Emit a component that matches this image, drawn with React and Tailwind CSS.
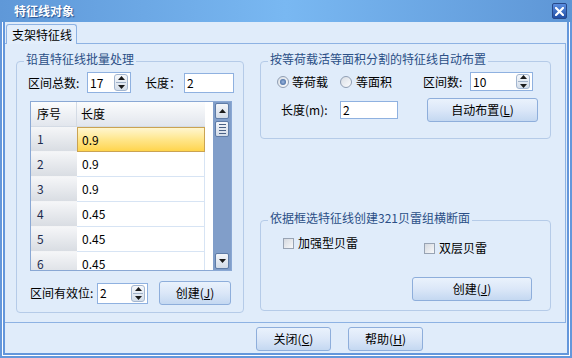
import React from 'react';

const rows = [
  ['1', '0.9'],
  ['2', '0.9'],
  ['3', '0.9'],
  ['4', '0.45'],
  ['5', '0.45'],
  ['6', '0.45'],
];

function Arrow({ up, color = '#1b1b1b' }) {
  return (
    <svg width="7" height="4" viewBox="0 0 7 4" className="block">
      <path d={up ? 'M0 4 L3.5 0 L7 4 Z' : 'M0 0 L3.5 4 L7 0 Z'} fill={color} />
    </svg>
  );
}

function SpinBox({ value, className = '', tall = true }) {
  return (
    <div className={`flex items-center bg-white border border-[#8fb1e0] ${tall ? 'h-[21px]' : 'h-[19px]'} ${className}`}>
      <span className="flex-1 pl-[2px] leading-[14px]">{value}</span>
      <div className={`mr-[2px] flex w-[14px] flex-col items-center justify-center gap-[2px] rounded-[3px] border border-[#a3b6d0] bg-linear-to-b from-[#f6f8fb] to-[#d4deea] ${tall ? 'h-[17px]' : 'h-[15px]'}`}>
        <Arrow up />
        <div className="h-px w-[10px] bg-[#9fb0c6]" />
        <Arrow />
      </div>
    </div>
  );
}

function Input({ value, className = '' }) {
  return (
    <div className={`flex items-center bg-white border border-[#8fb1e0] pl-[2px] leading-[14px] ${className}`}>
      {value}
    </div>
  );
}

function Btn({ children, className = '' }) {
  return (
    <div className={`flex items-center justify-center rounded-[3px] border border-[#8eaedb] bg-linear-to-b from-[#eaf2fc] via-[#dbe7f8] to-[#c4d8f1] text-black ${className}`}>
      {children}
    </div>
  );
}

function Group({ title, className = '', children }) {
  return (
    <fieldset className={`rounded-[4px] border border-[#b5cbe8] ${className}`}>
      <legend className="ml-[7px] px-[2px] pb-[4px] leading-[14px] text-[#2b4f86]">{title}</legend>
      {children}
    </fieldset>
  );
}

function Radio({ checked, className = '' }) {
  return (
    <span className={`flex h-[12px] w-[12px] shrink-0 items-center justify-center rounded-full border border-[#909eb3] bg-linear-to-br from-[#d9dee5] to-[#fbfcfd] ${className}`}>
      {checked && <span className="h-[6px] w-[6px] rounded-full bg-radial from-[#9db8e0] to-[#2f578f]" />}
    </span>
  );
}

function Check({ className = '' }) {
  return (
    <span className={`block h-[11px] w-[11px] shrink-0 border border-[#98a3b3] bg-linear-to-br from-[#d5d9df] to-[#f8f9fa] ${className}`} />
  );
}

function ScrollBtn({ children, className = '' }) {
  return (
    <div className={`mx-[2px] flex h-[16px] items-center justify-center rounded-[2px] border border-[#5f7ca7] bg-linear-to-b from-[#f4f6fa] to-[#d3dce8] ${className}`}>
      {children}
    </div>
  );
}

function Grid() {
  return (
    <div className="mt-[8px] ml-[13px] flex h-[170px] w-[202px] overflow-hidden border border-[#8aa8d4] bg-white">
      <div className="flex w-[174px] flex-col">
        <div className="flex h-[25px] shrink-0 border-b border-[#d4dbe5] bg-linear-to-b from-[#fbfcfd] to-[#e2e6ed]">
          <div className="flex w-[46px] items-center border-r border-[#d4dbe5] pl-[6px]">序号</div>
          <div className="flex flex-1 items-center pl-[4px]">长度</div>
        </div>
        {rows.map(([n, v], i) => (
          <div key={n} className="flex h-[25px] shrink-0">
            <div className="flex w-[46px] items-center border-b border-[#f3f4f6] bg-linear-to-b from-[#f5f6f8] to-[#d9dde3] pl-[6px] text-[#1d2b4d]">{n}</div>
            {i === 0 ? (
              <div className="flex flex-1 items-center border border-[#caa352] bg-linear-to-b from-[#fff6cf] via-[#ffe68a] to-[#ffd54a] pl-[4px]">{v}</div>
            ) : (
              <div className="flex flex-1 items-center border-r border-b border-[#d7e4f4] pl-[5px]">{v}</div>
            )}
          </div>
        ))}
      </div>
      <div className="w-[8px]" />
      <div className="flex w-[18px] flex-col bg-[#819ec9] py-px">
        <ScrollBtn><Arrow up /></ScrollBtn>
        <ScrollBtn className="mt-[2px] flex-col gap-[2px]">
          <div className="h-px w-[7px] bg-[#4a6185]" />
          <div className="h-px w-[7px] bg-[#4a6185]" />
          <div className="h-px w-[7px] bg-[#4a6185]" />
          <div className="h-px w-[7px] bg-[#4a6185]" />
        </ScrollBtn>
        <ScrollBtn className="mt-auto"><Arrow /></ScrollBtn>
      </div>
    </div>
  );
}

export default function App() {
  return (
    <div className="flex h-[358px] w-[572px] flex-col bg-[#6497db] font-['Noto_Sans_CJK_SC',sans-serif] text-[12px] text-black">
      {/* title bar */}
      <div className="flex h-[22px] shrink-0 items-center bg-linear-to-r from-[#5f98d8] via-[#79b8f2] to-[#5e96d6] pl-[14px] pr-[5px]">
        <span className="font-bold leading-[14px] text-white [text-shadow:1px_1px_1px_#24508f]">特征线对象</span>
        <div className="ml-auto flex h-[16px] w-[15px] items-center justify-center rounded-[2px] border border-[#27498a] bg-linear-to-b from-[#5b8ee0] to-[#214fa6]">
          <svg width="9" height="9" viewBox="0 0 9 9">
            <path d="M1 1 L8 8 M8 1 L1 8" stroke="#fff" strokeWidth="2.2" strokeLinecap="square" />
          </svg>
        </div>
      </div>

      <div className="mx-[2px] mb-[2px] flex-1 bg-white px-px pb-px">
        <div className="flex h-full flex-col border-x-2 border-b-2 border-[#6497db] bg-[#e0ecfa]">
          {/* tab header */}
          <div className="flex shrink-0 pt-[2px]">
            <div className="relative z-10 -mb-px ml-px flex h-[20px] w-[71px] items-center rounded-t-[3px] border-x border-t border-[#8db2e3] bg-[#e3eefb] pl-[5px]">
              支架特征线
            </div>
          </div>

          {/* tab panel */}
          <div className="mr-px flex h-[280px] shrink-0 border-y border-r border-[#8db2e3] pt-[8px]">
            <Group title="铅直特征线批量处理" className="ml-[11px] h-[261px] w-[228px]">
              <div className="mt-[2px] flex h-[21px] items-center pl-[11px]">
                <span className="w-[59px]">区间总数:</span>
                <SpinBox value="17" className="w-[44px]" />
                <span className="ml-[14px] w-[39px]">长度：</span>
                <Input value="2" className="h-[20px] w-[50px]" />
              </div>
              <Grid />
              <div className="mt-[10px] flex h-[24px] items-center pl-[13px]">
                <span className="w-[67px]">区间有效位:</span>
                <SpinBox value="2" className="w-[51px]" />
                <Btn className="ml-[11px] h-[24px] w-[72px]">创建(<u>J</u>)</Btn>
              </div>
            </Group>

            <div className="ml-[16px] flex flex-col">
              <Group title="按等荷载活等面积分割的特征线自动布置" className="h-[87px] w-[291px]">
                <div className="mt-[2px] flex h-[19px] items-center pl-[16px]">
                  <Radio checked />
                  <span className="ml-[3px]">等荷载</span>
                  <Radio className="ml-[12px]" />
                  <span className="ml-[4px]">等面积</span>
                  <span className="ml-[31px] w-[47px]">区间数:</span>
                  <SpinBox value="10" tall={false} className="w-[63px]" />
                </div>
                <div className="mt-[7px] flex h-[24px] items-center pl-[20px]">
                  <span className="w-[59px]">长度(m):</span>
                  <Input value="2" className="h-[18px] w-[58px]" />
                  <Btn className="ml-[29px] h-[24px] w-[111px]">自动布置(<u>L</u>)</Btn>
                </div>
              </Group>

              <Group title="依据框选特征线创建321贝雷组横断面" className="mt-[72px] h-[100px] w-[291px]">
                <div className="mt-[7px] flex items-start">
                  <div className="ml-[22px] flex h-[14px] items-center">
                    <Check />
                    <span className="ml-[4px]">加强型贝雷</span>
                  </div>
                  <div className="mt-[5px] ml-[66px] flex h-[14px] items-center">
                    <Check />
                    <span className="ml-[4px]">双层贝雷</span>
                  </div>
                </div>
                <Btn className="mt-[22px] ml-[151px] h-[24px] w-[120px]">创建(<u>J</u>)</Btn>
              </Group>
            </div>
          </div>

          {/* dialog buttons */}
          <div className="mt-[4px] flex shrink-0">
            <Btn className="ml-[251px] h-[24px] w-[75px]">关闭(<u>C</u>)</Btn>
            <Btn className="ml-[17px] h-[24px] w-[75px]">帮助(<u>H</u>)</Btn>
          </div>
        </div>
      </div>
    </div>
  );
}
